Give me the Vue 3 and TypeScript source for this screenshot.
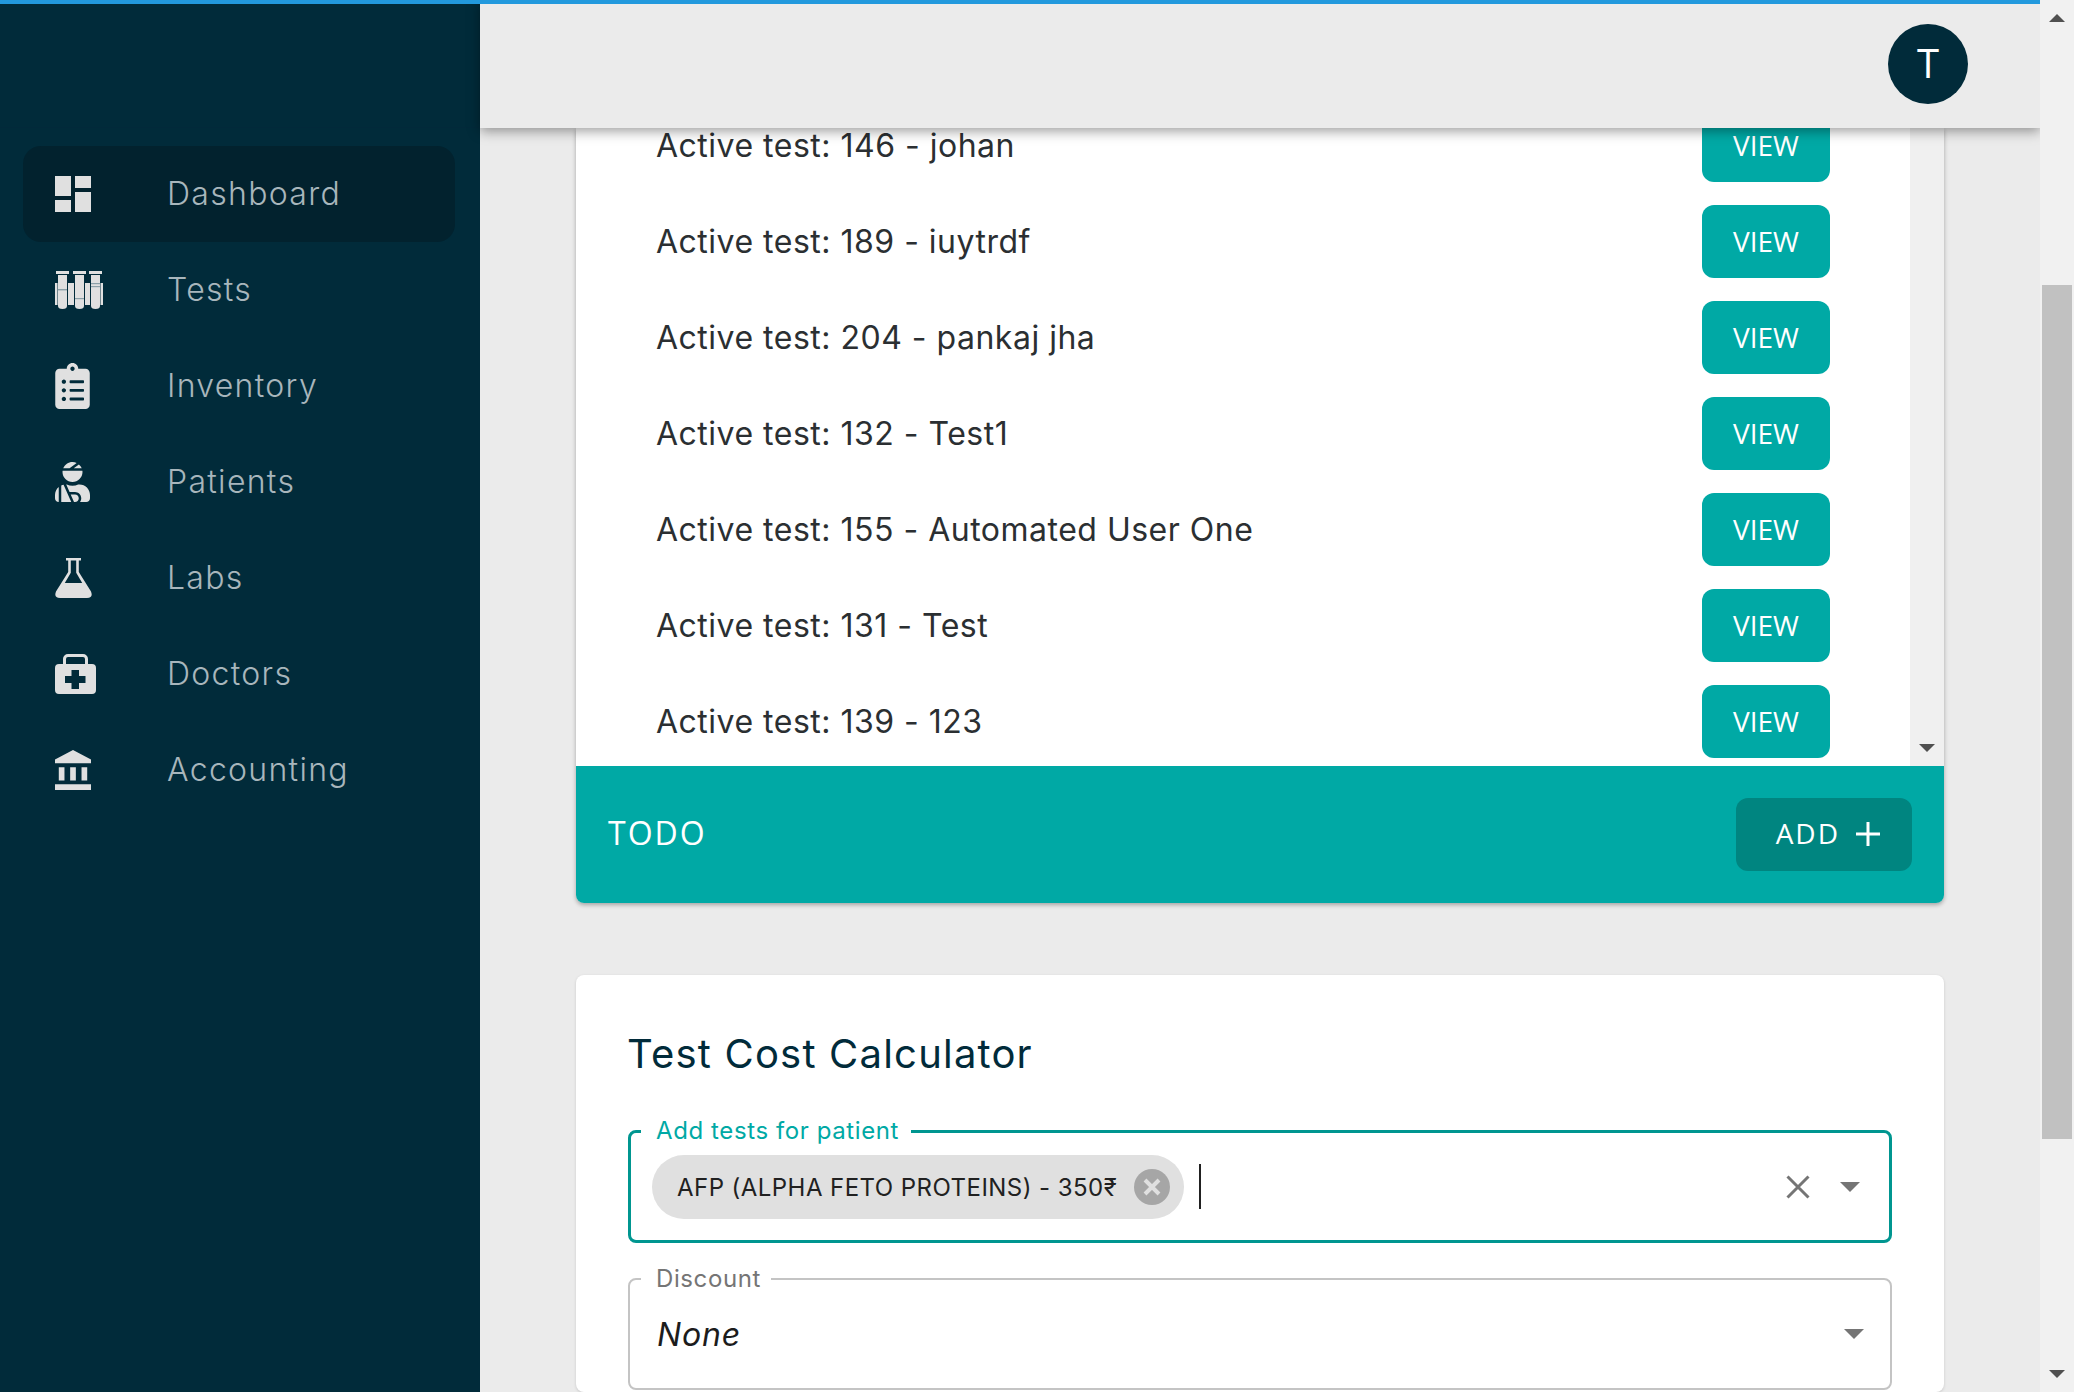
<script setup lang="ts">
const tests: string[] = [
  '146 - johan',
  '189 - iuytrdf',
  '204 - pankaj jha',
  '132 - Test1',
  '155 - Automated User One',
  '131 - Test',
  '139 - 123',
]
const nav: { label: string; icon: string; active?: boolean }[] = [
  { label: 'Dashboard', icon: 'dashboard', active: true },
  { label: 'Tests', icon: 'tests' },
  { label: 'Inventory', icon: 'inventory' },
  { label: 'Patients', icon: 'patients' },
  { label: 'Labs', icon: 'labs' },
  { label: 'Doctors', icon: 'doctors' },
  { label: 'Accounting', icon: 'accounting' },
]
</script>

<template>
  <div class="page">
    <div class="progress"></div>
    <div class="shell">
      <aside class="sidebar">
        <div class="brand"></div>
        <nav class="nav">
          <div v-for="item in nav" :key="item.label" class="nav-item" :class="{ active: item.active }">
            <span class="nav-icon">
              <svg v-if="item.icon === 'dashboard'" class="ico" width="48" height="48" viewBox="0 0 24 24" style="margin-left:-6px">
                <path d="M3 13h8V3H3v10zm0 8h8v-6H3v6zm10 0h8V11h-8v10zm0-18v6h8V3h-8z" />
              </svg>
              <svg v-else-if="item.icon === 'tests'" class="ico" width="48" height="38" viewBox="0 0 48 38">
                <rect x="1" y="0" width="13" height="3" />
                <rect x="18" y="0" width="13" height="3" />
                <rect x="34" y="0" width="13" height="3" />
                <path d="M3 4h9v31a4.5 3 0 0 1-9 0z" />
                <path d="M20 4h9v31a4.5 3 0 0 1-9 0z" />
                <path d="M36 4h9v31a4.5 3 0 0 1-9 0z" />
                <rect x="0" y="12" width="2.5" height="22" />
                <rect x="13" y="12" width="6" height="22" />
                <rect x="30" y="12" width="5" height="22" />
                <rect x="45.5" y="12" width="2.5" height="22" />
                <rect class="cut" x="3" y="18" width="9" height="1.4" />
                <rect class="cut" x="20" y="27" width="9" height="1.2" />
                <rect class="cut" x="36" y="12" width="9" height="1.2" />
                <rect class="cut" x="36" y="15" width="9" height="1.2" />
              </svg>
              <svg v-else-if="item.icon === 'inventory'" class="ico" width="35" height="46" viewBox="0 0 384 512">
                <path d="M336 64h-80c0-35.3-28.7-64-64-64s-64 28.7-64 64H48C21.5 64 0 85.5 0 112v352c0 26.5 21.5 48 48 48h288c26.5 0 48-21.5 48-48V112c0-26.5-21.5-48-48-48zM96 424c-13.3 0-24-10.7-24-24s10.7-24 24-24 24 10.7 24 24-10.7 24-24 24zm0-96c-13.3 0-24-10.7-24-24s10.7-24 24-24 24 10.7 24 24-10.7 24-24 24zm0-96c-13.3 0-24-10.7-24-24s10.7-24 24-24 24 10.7 24 24-10.7 24-24 24zm96-192c13.3 0 24 10.7 24 24s-10.7 24-24 24-24-10.7-24-24 10.7-24 24-24zm128 368c0 4.4-3.6 8-8 8H168c-4.4 0-8-3.6-8-8v-16c0-4.4 3.6-8 8-8h144c4.4 0 8 3.6 8 8v16zm0-96c0 4.4-3.6 8-8 8H168c-4.4 0-8-3.6-8-8v-16c0-4.4 3.6-8 8-8h144c4.4 0 8 3.6 8 8v16zm0-96c0 4.4-3.6 8-8 8H168c-4.4 0-8-3.6-8-8v-16c0-4.4 3.6-8 8-8h144c4.4 0 8 3.6 8 8v16z" />
              </svg>
              <svg v-else-if="item.icon === 'patients'" class="ico" width="35" height="40" viewBox="0 0 448 512">
                <path d="M277.37 11.98C261.08 4.47 243.11 0 224 0c-53.69 0-99.5 33.13-118.51 80h81.19l90.69-68.02zM342.51 80c-7.9-19.47-20.67-36.2-36.49-49.52L239.99 80h102.52zM224 256c70.69 0 128-57.31 128-128 0-5.48-.95-10.7-1.61-16H97.61c-.67 5.3-1.61 10.52-1.61 16 0 70.69 57.31 128 128 128zM80 299.7V512h128.26l-98.45-221.52A132.835 132.835 0 0 0 80 299.7zM0 464c0 26.51 21.49 48 48 48V320.24C18.88 344.89 0 381.26 0 422.4V464zm256-48h-55.38l42.67 96H256c26.47 0 48-21.53 48-48s-21.53-48-48-48zm57.6-128h-16.71c-22.24 10.18-46.88 16-72.89 16s-50.65-5.82-72.89-16h-7.37l42.67 96H256c44.11 0 80 35.89 80 80 0 18.08-6.26 34.59-16.41 48H400c26.51 0 48-21.49 48-48v-41.6c0-74.23-60.17-134.4-134.4-134.4z" />
              </svg>
              <svg v-else-if="item.icon === 'labs'" class="ico" width="37" height="40" viewBox="0 0 37 40">
                <path fill-rule="evenodd" d="M11 0h15v2.500h-2.200V14L36 33.500Q38.500 40 32 40H5Q-1.500 40 1 33.500L13.200 14V2.500H11zM15.800 2.500V14.800L9.800 25H27.200L21.200 14.800V2.500z" />
              </svg>
              <svg v-else-if="item.icon === 'doctors'" class="ico" width="41" height="40" viewBox="0 0 41 40">
                <path fill-rule="evenodd" d="M13 0h15a5 5 0 0 1 5 5v5h4a4 4 0 0 1 4 4v22a4 4 0 0 1-4 4H4a4 4 0 0 1-4-4V14a4 4 0 0 1 4-4h4V5a5 5 0 0 1 5-5zm0 3a2 2 0 0 0-2 2v5h19V5a2 2 0 0 0-2-2zM16.500 16v6h-6.500v7h6.500v6h7.500v-6h6.500v-7h-6.500v-6z" />
              </svg>
              <svg v-else class="ico" width="36" height="40" viewBox="2 1 19 21" preserveAspectRatio="none">
                <path d="M4 10v7h3v-7H4zm6 0v7h3v-7h-3zM2 22h19v-3H2v3zm14-12v7h3v-7h-3zm-4.500-9L2 6v2h19V6l-9.500-5z" />
              </svg>
            </span>
            <span class="nav-label">{{ item.label }}</span>
          </div>
        </nav>
      </aside>

      <div class="main">
        <header class="topbar">
          <div class="avatar">T</div>
        </header>

        <div class="content">
          <section class="card-list">
            <div class="list-body">
              <div class="rows">
                <div v-for="t in tests" :key="t" class="row">
                  <span class="row-text">Active test: {{ t }}</span>
                  <button class="view-btn">VIEW</button>
                </div>
              </div>
              <div class="inner-scroll">
                <svg class="inner-arrow" width="16" height="8" viewBox="0 0 16 8"><path d="M0 0h16L8 8z" /></svg>
              </div>
            </div>
            <div class="todo">
              <span class="todo-title">TODO</span>
              <button class="add-btn">
                <span>ADD</span>
                <svg width="26" height="26" viewBox="0 0 26 26"><path d="M11.500 1h3v10.500H25v3H14.500V25h-3V14.500H1v-3h10.500z" /></svg>
              </button>
            </div>
          </section>

          <section class="card-calc">
            <h2 class="calc-title">Test Cost Calculator</h2>

            <div class="field focused">
              <span class="field-label">Add tests for patient</span>
              <div class="chip">
                <span class="chip-text">AFP (ALPHA FETO PROTEINS) - 350₹</span>
                <svg class="chip-x" width="36" height="36" viewBox="0 0 36 36">
                  <circle cx="18" cy="18" r="18" />
                  <path d="M11 11l14 14M25 11L11 25" />
                </svg>
              </div>
              <span class="caret-line"></span>
              <div class="field-end">
                <svg class="clear" width="24" height="24" viewBox="0 0 24 24"><path d="M1.500 1.500l21 21M22.500 1.500l-21 21" /></svg>
                <svg class="tri" width="20" height="10" viewBox="0 0 20 10"><path d="M0 0h20L10 10z" /></svg>
              </div>
            </div>

            <div class="field plain">
              <span class="field-label">Discount</span>
              <span class="none">None</span>
              <div class="field-end">
                <svg class="tri" width="20" height="10" viewBox="0 0 20 10"><path d="M0 0h20L10 10z" /></svg>
              </div>
            </div>
          </section>
        </div>
      </div>

      <div class="page-scroll">
        <svg class="arrow" width="16" height="8" viewBox="0 0 16 8"><path d="M8 0l8 8H0z" /></svg>
        <div class="track"><div class="thumb"></div></div>
        <svg class="arrow" width="16" height="8" viewBox="0 0 16 8"><path d="M0 0h16L8 8z" /></svg>
      </div>
    </div>
  </div>
</template>

<style>
html, body { margin: 0; overflow: hidden; background: #ebebeb; }
</style>

<style scoped>
.page {
  position: relative;
  width: 2074px;
  height: 1392px;
  overflow: hidden;
  font-family: Inter, "Noto Sans", sans-serif;
}
.progress {
  position: absolute;
  z-index: 5;
  top: 0;
  left: 0;
  width: 2040px;
  height: 4px;
  background: #2299dd;
}
.shell { display: flex; height: 100%; }

.sidebar {
  width: 480px;
  flex: none;
  background: #012b3a;
  box-sizing: border-box;
}
.brand {
  height: 128px;
  box-sizing: border-box;
  border-bottom: 1px solid #02293a;
  margin-bottom: 18px;
}
.nav { display: flex; flex-direction: column; padding: 0 25px 0 23px; }
.nav-item {
  height: 96px;
  display: flex;
  align-items: center;
  border-radius: 18px;
}
.nav-item.active { background: #02222e; }
.nav-icon {
  width: 112px;
  margin-left: 32px;
  flex: none;
  display: flex;
  align-items: center;
}
.ico { fill: #e0e0e0; display: block; }
.ico .cut { fill: #8ba0a8; }
.nav-label {
  font-size: 32px;
  font-weight: 300;
  line-height: 40px;
  color: #a8b6bc;
  letter-spacing: 1.3px;
}

.main {
  flex: 1;
  min-width: 0;
  display: flex;
  flex-direction: column;
  height: 1392px;
}
.topbar {
  position: relative;
  z-index: 3;
  height: 128px;
  flex: none;
  background: #ebebeb;
  box-shadow: 0 3px 12px rgba(0, 0, 0, 0.4);
  display: flex;
  align-items: center;
  justify-content: flex-end;
  padding: 0 72px 0 0;
  box-sizing: border-box;
}
.avatar {
  width: 80px;
  height: 80px;
  border-radius: 50%;
  background: #012b3a;
  color: #fff;
  font-family: "Open Sans", sans-serif;
  font-size: 40px;
  line-height: 78px;
  text-align: center;
}
.content {
  flex: 1;
  min-height: 0;
  overflow: hidden;
  padding: 0 96px;
  display: flex;
  flex-direction: column;
  gap: 72px;
}
.card-list {
  flex: none;
  border-radius: 0 0 8px 8px;
  box-shadow: 0 2px 4px rgba(0, 0, 0, 0.3);
  overflow: hidden;
}
.list-body {
  height: 638px;
  display: flex;
  background: #fff;
  overflow: hidden;
}
.rows {
  flex: 1;
  display: flex;
  flex-direction: column;
  justify-content: flex-end;
  padding: 0 80px;
  min-width: 0;
}
.row {
  flex: none;
  height: 96px;
  box-sizing: border-box;
  padding-top: 11px;
  display: flex;
  align-items: flex-start;
  justify-content: space-between;
}
.rows .row:last-child { margin-bottom: -4px; }
.row-text {
  font-size: 32px;
  line-height: 73px;
  font-weight: 400;
  color: #2b2f32;
  letter-spacing: 0.5px;
}
.view-btn {
  width: 128px;
  height: 73px;
  border: none;
  border-radius: 12px;
  background: #00a9a5;
  color: #fff;
  font-family: "Open Sans", sans-serif;
  font-size: 28px;
  padding: 0 0 2px;
}
.inner-scroll {
  width: 34px;
  flex: none;
  background: #f0f0f0;
  display: flex;
  align-items: flex-end;
  justify-content: center;
  padding-bottom: 14px;
  box-sizing: border-box;
}
.inner-arrow { fill: #505050; }
.todo {
  height: 137px;
  background: #00a9a5;
  display: flex;
  align-items: center;
  justify-content: space-between;
  padding: 0 32px;
  box-sizing: border-box;
  color: #fff;
}
.todo-title {
  font-family: "Open Sans", sans-serif;
  font-size: 32px;
  letter-spacing: 2px;
  padding-bottom: 4px;
}
.add-btn {
  width: 176px;
  height: 73px;
  border: none;
  border-radius: 12px;
  background: #008580;
  color: #fff;
  display: flex;
  align-items: center;
  justify-content: flex-end;
  gap: 15px;
  padding: 0 31px 0 0;
  font-family: "Open Sans", sans-serif;
  font-size: 28px;
  letter-spacing: 2px;
}
.add-btn span { padding-bottom: 4px; }
.add-btn svg { fill: #fff; margin-bottom: 2px; }

.card-calc {
  flex: 1;
  background: #fff;
  border-radius: 8px;
  padding: 50px 52px 0;
  box-shadow: 0 1px 3px rgba(0, 0, 0, 0.15);
  display: flex;
  flex-direction: column;
}
.calc-title {
  margin: 0 0 47px -1px;
  font-size: 40px;
  line-height: 58px;
  font-weight: 400;
  color: #012b3a;
  letter-spacing: 1.2px;
}
.field {
  position: relative;
  box-sizing: border-box;
  border-radius: 8px;
  display: flex;
  align-items: center;
  flex: none;
}
.field.focused {
  height: 113px;
  border: 3px solid #009690;
  padding-left: 21px;
  margin-bottom: 35px;
}
.field.plain {
  height: 112px;
  border: 2px solid #c4c4c4;
  padding-left: 27px;
}
.field-label {
  position: absolute;
  top: -17px;
  left: 10px;
  padding: 0 12px 0 15px;
  background: #fff;
  font-size: 24px;
  line-height: 30px;
  letter-spacing: 0.6px;
}
.focused .field-label { color: #00a9a5; }
.plain .field-label { color: #757575; top: -16px; left: 11px; padding-right: 10px; }
.chip {
  height: 64px;
  border-radius: 32px;
  background: #e0e0e0;
  display: flex;
  align-items: center;
  padding: 0 14px 0 25px;
  gap: 17px;
  color: #212121;
}
.chip-text { font-size: 24px; white-space: nowrap; letter-spacing: 0.45px; padding-top: 1px; }
.chip-x circle { fill: #a6a6a6; }
.chip-x path { stroke: #e0e0e0; stroke-width: 4; fill: none; }
.caret-line {
  width: 2px;
  height: 45px;
  background: #212121;
  margin-left: 15px;
}
.none {
  font-size: 32px;
  font-style: italic;
  font-weight: 400;
  color: #1c1c1c;
  letter-spacing: 0.8px;
}
.field-end {
  position: absolute;
  right: 29px;
  top: 50%;
  transform: translateY(-50%);
  display: flex;
  align-items: center;
  gap: 30px;
}
.plain .field-end { right: 26px; }
.clear path { stroke: #757575; stroke-width: 3; fill: none; }
.tri { fill: #757575; display: block; }

.page-scroll {
  width: 34px;
  flex: none;
  position: relative;
  z-index: 4;
  background: #f1f1f1;
  display: flex;
  flex-direction: column;
  align-items: center;
}
.arrow { fill: #505050; flex: none; margin: 14px 0; }
.track { flex: 1; width: 100%; padding: 0 2px; box-sizing: border-box; min-height: 0; }
.thumb { height: 854px; margin-top: 249px; background: #c1c1c1; }
</style>
